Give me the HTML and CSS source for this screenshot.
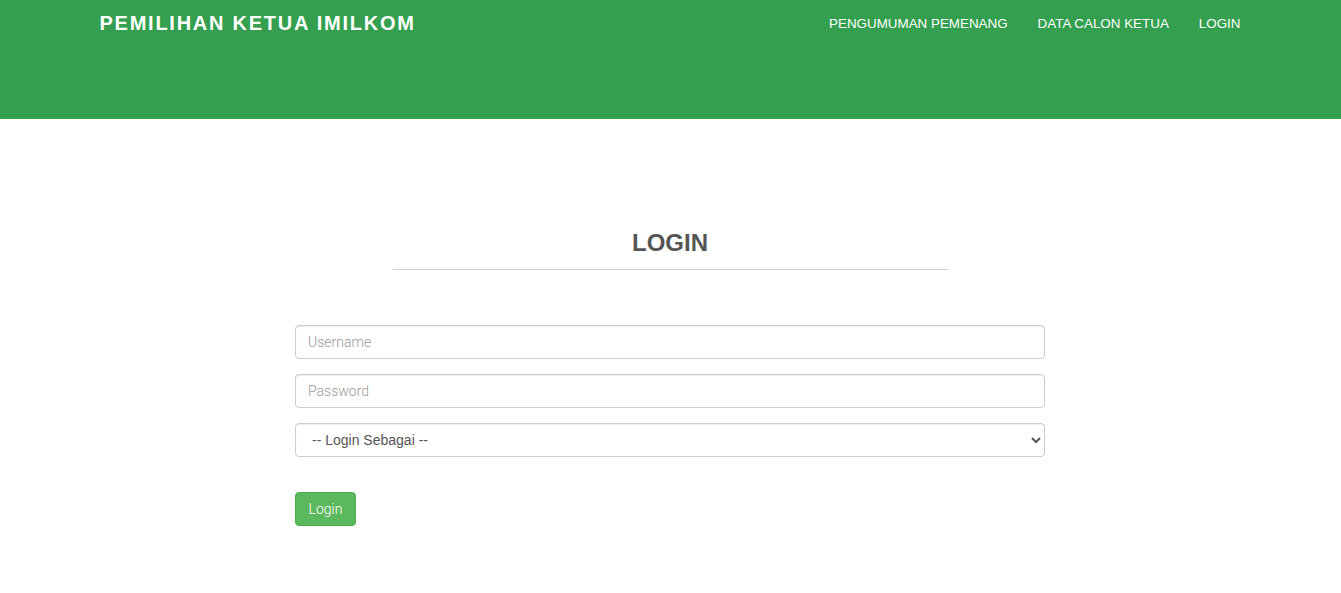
FILE: index.html
```html
<!DOCTYPE html>
<html>
<head>
<meta charset="utf-8">
<link rel="stylesheet" href="styles.css">
</head>
<body>
<header class="topbar">
  <div class="container bar-inner">
    <div class="brand">PEMILIHAN KETUA IMILKOM</div>
    <nav class="nav">
      <a href="#">PENGUMUMAN PEMENANG</a>
      <a href="#">DATA CALON KETUA</a>
      <a href="#">LOGIN</a>
    </nav>
  </div>
</header>
<main class="main">
  <div class="heading">
    <h2>LOGIN</h2>
    <hr class="rule">
  </div>
  <form class="form">
    <input class="field" type="text" placeholder="Username">
    <input class="field" type="password" placeholder="Password">
    <select class="field select">
      <option>-- Login Sebagai --</option>
    </select>
    <button class="btn" type="button">Login</button>
  </form>
</main>
</body>
</html>
```
FILE: styles.css
```css
* { box-sizing: border-box; }
html, body { margin: 0; padding: 0; background: #fff; }
body { font-family: Roboto, "Liberation Sans", sans-serif; font-size: 14px; color: #333; }
.topbar { background: #339f4f; height: 119px; }
.container { width: 1170px; margin: 0 auto; padding: 0 15px; }
.bar-inner { display: flex; justify-content: space-between; align-items: flex-start; }
.brand { font-family: "Liberation Sans", Arial, sans-serif; font-weight: bold; font-size: 20px; letter-spacing: 1.75px; color: #fff; padding-top: 11px; line-height: 24px; margin-left: -1px; }
.nav { display: flex; gap: 30px; padding-top: 16px; }
.nav a { font-family: "Liberation Sans", Arial, sans-serif; color: #fff; text-decoration: none; font-size: 13.4px; line-height: 16px; }
.main { width: 750px; margin: 0 0 0 calc(50% - 375.5px); padding-top: 110px; }
.heading { width: 555px; margin: 0 auto; text-align: center; }
.heading h2 { margin: 0; font-family: "Liberation Sans", Arial, sans-serif; font-size: 24px; font-weight: bold; color: #555; line-height: 28px; }
.rule { border: 0; border-top: 1px solid #ccc; margin: 12px 0 0; }
.form { display: flex; flex-direction: column; align-items: flex-start; margin-top: 55px; }
.field { width: 750px; height: 34px; border: 1px solid #ccc; border-radius: 4px; padding: 6px 12px; font-family: Roboto, "Liberation Sans", sans-serif; font-size: 14px; font-weight: 300; color: #555; margin-bottom: 15px; background: #fff; box-shadow: inset 0 1px 1px rgba(0,0,0,.075); }
.field::placeholder { color: #999; }
.select { font-family: "Liberation Sans", Arial, sans-serif; font-weight: 400; padding: 6px 12px 6px 12px; }
.btn { margin-top: 20px; height: 34px; width: 61px; padding: 0; background: #5cb85c; border: 1px solid #4cae4c; border-radius: 4px; color: #fff; font-family: Roboto, "Liberation Sans", sans-serif; font-weight: 300; font-size: 14px; }
```
